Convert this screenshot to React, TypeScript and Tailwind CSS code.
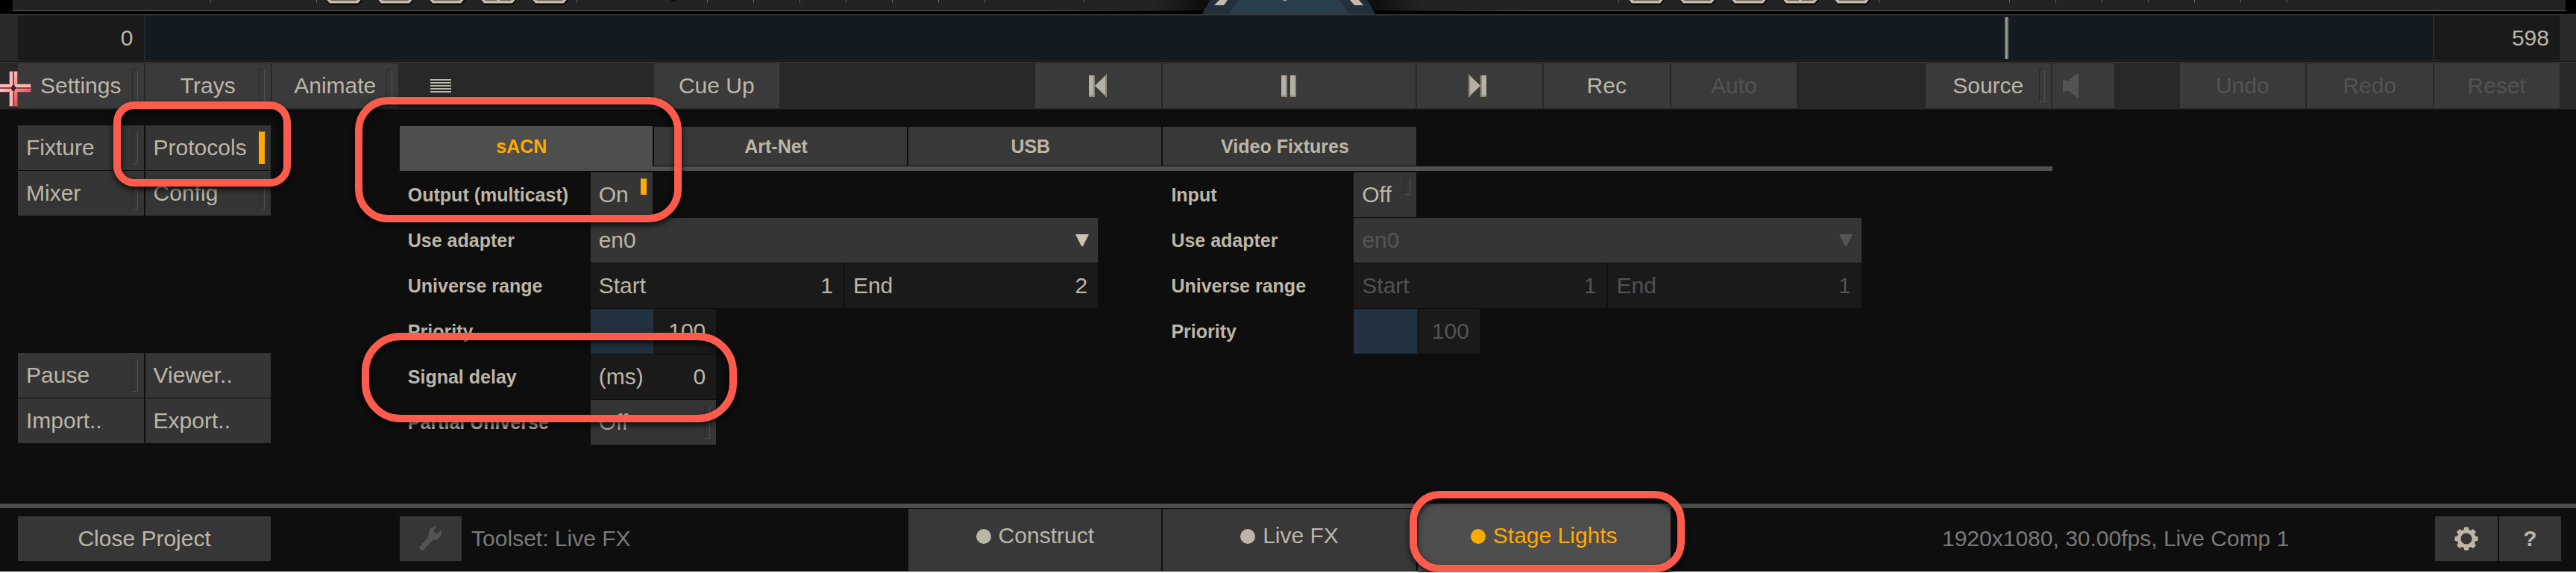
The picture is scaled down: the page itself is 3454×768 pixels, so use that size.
import type { ReactNode } from "react";

const LIGHT = "#bcb6a8";

function Led({ on = false, short = false }: { on?: boolean; short?: boolean }) {
  return (
    <span
      className={`absolute right-2 top-2 w-2 border ${short ? "h-[22px]" : "h-11"} ${
        on
          ? "border-[#ffaa00] border-t-[#b97a00] bg-[#ffaa00]"
          : "border-r-[#505050] border-b-[#505050] border-t-[#292929] border-l-[#2b2b2b]"
      }`}
    />
  );
}

function BarButton({
  children,
  span = "col-span-2",
  led = false,
  disabled = false,
  label,
}: {
  children: ReactNode;
  span?: string;
  led?: boolean;
  disabled?: boolean;
  label?: string;
}) {
  return (
    <button
      type="button"
      aria-label={label}
      disabled={disabled}
      className={`relative flex h-[60px] items-center justify-center bg-[#3a3a3a] ${
        disabled ? "text-[#535353]" : ""
      } ${span}`}
    >
      {children}
      {led && <Led />}
    </button>
  );
}

function SideButton({ children, led = false, on = false }: { children: ReactNode; led?: boolean; on?: boolean }) {
  return (
    <button
      type="button"
      aria-pressed={led ? on : undefined}
      className="relative h-[60px] w-full bg-[#353535] px-[11px] text-left"
    >
      {children}
      {led && <Led on={on} />}
    </button>
  );
}

function Ring({ className }: { className: string }) {
  return (
    <span
      aria-hidden="true"
      className={`pointer-events-none absolute z-20 border-10 border-[#ff5b4c] shadow-[0_4px_8px_rgba(0,0,0,0.75),inset_0_4px_8px_rgba(0,0,0,0.75)] ${className}`}
    />
  );
}

function FrameRow({ x }: { x: number[] }) {
  return (
    <>
      {x.map((left, i) => (
        <g key={left}>
          <path
            d={`M${left + 3} -8V0.5L${left + 6} 3.5H${left + 41}L${left + 44} 0.5V-8`}
            fill="none"
            stroke="#000"
            strokeWidth="6"
          />
          <path
            d={`M${left + 2} -8V-1L${left + 5} 2.5H${left + 41}L${left + 44} -1V-8`}
            fill="none"
            stroke="#c2bbac"
            strokeWidth="4"
          />
          {i === 3 && <path d={`M${left + 23} -8V2`} stroke="#c2bbac" strokeWidth="4" />}
        </g>
      ))}
    </>
  );
}

function Ticks({ x }: { x: number[] }) {
  return (
    <>
      {x.map((left) => (
        <rect key={left} x={left} y="0" width="1" height="4" fill="#5c5c5c" />
      ))}
    </>
  );
}

function ViewerStrip() {
  return (
    <div className="relative flex h-[19px] justify-between overflow-hidden bg-black pl-[17px] pr-3.5">
      <div className="flex h-[15px] w-full justify-between border-b border-[#5a5a5a] bg-[#232323]">
        <svg width="1480" height="14" viewBox="17 0 1480 14" className="shrink-0" aria-hidden="true">
          <Ticks x={[282, 424, 773, 948, 1010, 1072, 1134, 1196, 1258, 1320, 1453]} />
          <FrameRow x={[438, 507, 576, 645, 714]} />
          <path d="M899 0H907L904 2.500H901Z" fill="#150d02" />
        </svg>
        <svg width="1300" height="14" viewBox="2140 0 1300 14" className="shrink-0" aria-hidden="true">
          <Ticks x={[2170, 2519, 2694, 2756, 2818, 2880, 2942, 3004, 3066]} />
          <FrameRow x={[2184, 2253, 2322, 2391, 2460]} />
        </svg>
      </div>
      <svg
        width="640"
        height="19"
        viewBox="-320 0 640 19"
        className="absolute left-1/2 top-0 -translate-x-1/2"
        aria-hidden="true"
      >
        <defs>
          <linearGradient id="edge">
            <stop offset="0" stopColor="#000" stopOpacity="0" />
            <stop offset="0.3" stopColor="#000" stopOpacity="1" />
            <stop offset="0.7" stopColor="#000" stopOpacity="1" />
            <stop offset="1" stopColor="#000" stopOpacity="0" />
          </linearGradient>
          <linearGradient id="halo">
            <stop offset="0.22" stopColor="#000" stopOpacity="0" />
            <stop offset="0.32" stopColor="#000" stopOpacity="0.6" />
            <stop offset="0.68" stopColor="#000" stopOpacity="0.6" />
            <stop offset="0.78" stopColor="#000" stopOpacity="0" />
          </linearGradient>
        </defs>
        <rect x="-320" y="0" width="640" height="14" fill="url(#halo)" />
        <rect x="-320" y="14" width="640" height="1" fill="url(#edge)" />
        <circle cx="1" cy="73" r="128" fill="#22303e" />
        <circle cx="1" cy="60" r="90" fill="#2a3f4e" />
        <path d="M-92 0H-81L-86 7H-99Z" fill="#c2bbac" />
        <path d="M95 0H83L89 7H101Z" fill="#c2bbac" />
        <circle cx="-4" cy="-3" r="4" fill="#c2bbac" />
      </svg>
    </div>
  );
}

function Timeline() {
  return (
    <div className="grid grid-cols-40 gap-x-[2px] border-t border-b border-t-[#363636] border-b-[#191919] bg-[#282828] py-px pl-6 pr-[22px]">
      <output className="col-span-2 h-[60px] bg-[#1a1a1a] pr-3.5 text-right">0</output>
      <input
        type="range"
        aria-label="Frame"
        min={0}
        max={598}
        defaultValue={487}
        className="col-span-36 h-[60px] w-full appearance-none bg-[#131a21] [&::-webkit-slider-thumb]:h-14 [&::-webkit-slider-thumb]:w-[5px] [&::-webkit-slider-thumb]:appearance-none [&::-webkit-slider-thumb]:border-x-2 [&::-webkit-slider-thumb]:border-[#77776e] [&::-webkit-slider-thumb]:bg-[#a5a497]"
      />
      <output className="col-span-2 h-[60px] bg-[#1a1a1a] pr-3.5 text-right">598</output>
    </div>
  );
}

function StepIcon({ flip = false }: { flip?: boolean }) {
  return (
    <svg width="24" height="32" viewBox="0 0 24 32" className={flip ? "-scale-x-100" : ""} aria-hidden="true">
      <path d="M0 2H8V31H0Z" fill="#8f897c" />
      <path d="M0 2H6V29H0Z" fill="#b7b1a3" />
      <path d="M24 0V32L8 16Z" fill="#8f897c" />
      <path d="M22 3V28L8 16Z" fill="#b7b1a3" />
    </svg>
  );
}

function Toolbar() {
  return (
    <div className="relative grid grid-cols-40 gap-x-[2px] border-t border-b border-t-[#363636] border-b-[#1c1c1c] bg-[#282828] py-px pl-6 pr-[22px]">
      <svg
        width="42"
        height="48"
        viewBox="0 0 42 48"
        className="absolute left-0 top-[11px] z-10"
        aria-hidden="true"
      >
        <defs>
          <linearGradient id="crossV" x1="0" y1="0" x2="0" y2="1">
            <stop offset="0" stopColor="#f7b9bb" />
            <stop offset="1" stopColor="#f04a58" />
          </linearGradient>
          <linearGradient id="crossH" x1="0" y1="0" x2="1" y2="0">
            <stop offset="0" stopColor="#f9c4c4" />
            <stop offset="1" stopColor="#f25563" />
          </linearGradient>
        </defs>
        <path d="M12 0H24V48H12ZM0 17H42V29H0Z" fill="#8a4347" />
        <path d="M19 1H23V19H19ZM19 27H23V47H19Z" fill="url(#crossV)" />
        <path d="M13 1H17V19H13ZM13 27H17V47H13Z" fill="#f9b8ba" />
        <path d="M0 18H16V22H0ZM20 18H41V22H20Z" fill="#f9b8ba" />
        <path d="M0 24H16V28H0ZM20 24H41V28H20Z" fill="url(#crossH)" />
        <circle cx="18" cy="23" r="3" fill="#3a2123" />
      </svg>
      <BarButton led>Settings</BarButton>
      <BarButton led>Trays</BarButton>
      <BarButton led>Animate</BarButton>
      <button type="button" aria-label="Menu" className="col-span-2 flex items-center pl-[41px]">
        <svg width="28" height="18" viewBox="0 0 28 18" fill={LIGHT} aria-hidden="true">
          <path d="M0 0H28V2H0ZM0 4H28V6H0ZM0 8H28V10H0ZM0 12H28V14H0ZM0 16H28V18H0Z" />
        </svg>
      </button>
      <BarButton span="col-span-2 col-start-11">Cue Up</BarButton>
      <BarButton span="col-span-2 col-start-17" label="Previous">
        <StepIcon />
      </BarButton>
      <BarButton span="col-span-4" label="Pause playback">
        <svg width="20" height="29" viewBox="0 0 20 29" aria-hidden="true">
          <path d="M0 0H8V29H0ZM12 0H20V29H12Z" fill="#8f897c" />
          <path d="M0 0H6V27H0ZM12 0H18V27H12Z" fill="#b7b1a3" />
        </svg>
      </BarButton>
      <BarButton label="Next" span="col-span-2 pr-1.5">
        <StepIcon flip />
      </BarButton>
      <BarButton>Rec</BarButton>
      <BarButton disabled>Auto</BarButton>
      <BarButton span="col-span-2 col-start-31" led>
        Source
      </BarButton>
      <button type="button" aria-label="Audio" disabled className="flex h-[60px] items-center bg-[#3a3a3a] pl-3.5">
        <svg width="22" height="34" viewBox="0 0 22 34" fill="#535353" aria-hidden="true">
          <path d="M0 9H3V10H8V9L21 0V34L8 24H3V26H0Z" />
        </svg>
      </button>
      <BarButton span="col-span-2 col-start-35" disabled>
        Undo
      </BarButton>
      <BarButton disabled>Redo</BarButton>
      <BarButton disabled>Reset</BarButton>
    </div>
  );
}

function FieldRow({ label, htmlFor, children }: { label: string; htmlFor: string; children: ReactNode }) {
  return (
    <div className="relative grid grid-cols-12 gap-x-[2px]">
      <label htmlFor={htmlFor} className="col-span-3 px-[11px] text-[25px] font-bold">
        {label}
      </label>
      {children}
    </div>
  );
}

function NumberField({
  id,
  prefix,
  value,
  disabled = false,
  span,
}: {
  id: string;
  prefix: string;
  value: string;
  disabled?: boolean;
  span: string;
}) {
  return (
    <div className={`flex h-[60px] bg-[#1a1a1a] pl-[11px] pr-3.5 ${disabled ? "text-[#525252]" : ""} ${span}`}>
      <span>{prefix}</span>
      <input
        id={id}
        aria-label={prefix}
        defaultValue={value}
        disabled={disabled}
        className="w-0 min-w-0 flex-1 bg-transparent text-right"
      />
    </div>
  );
}

function AdapterSelect({ id, disabled = false }: { id: string; disabled?: boolean }) {
  return (
    <div className="relative col-span-8">
      <select
        id={id}
        disabled={disabled}
        className={`h-[60px] w-full appearance-none bg-[#353535] px-[11px] opacity-100 ${
          disabled ? "text-[#555555]" : ""
        }`}
      >
        <option>en0</option>
      </select>
      <svg
        width="18"
        height="16"
        viewBox="0 0 18 16"
        className="pointer-events-none absolute right-3 top-[22px]"
        fill={disabled ? "#555555" : "#c9c3b5"}
        aria-hidden="true"
      >
        <path d="M0 0H18L10 16H8Z" />
      </svg>
    </div>
  );
}

function PriorityField({ id, disabled = false }: { id: string; disabled?: boolean }) {
  return (
    <div className={`col-span-2 flex h-[60px] bg-[#1a1a1a] ${disabled ? "text-[#525252]" : ""}`}>
      <span className="w-1/2 bg-[#22313f]" />
      <input
        id={id}
        defaultValue="100"
        disabled={disabled}
        className="w-1/2 bg-transparent pr-3.5 text-right"
      />
    </div>
  );
}

function Toggle({ id, value, on = false }: { id: string; value: string; on?: boolean }) {
  return (
    <button id={id} type="button" aria-pressed={on} className="relative h-[60px] bg-[#353535] px-[11px] text-left">
      {value}
      <Led on={on} short />
    </button>
  );
}

function ProtocolTabs() {
  return (
    <div
      role="tablist"
      className="grid h-[60px] grid-cols-26 items-start gap-x-[2px] bg-[linear-gradient(to_top,#505050_6px,transparent_6px)] text-[25px] font-bold"
    >
      <div className="relative col-span-4">
        <button
          role="tab"
          type="button"
          aria-selected="true"
          className="flex h-[60px] w-full items-center justify-center bg-[#4e4e4e] pb-1.5 pr-3 text-[#ffaa00]"
        >
          sACN
        </button>
        <Ring className="-bottom-[69px] -left-[60px] -right-[39px] -top-[39px] rounded-[44px]" />
      </div>
      {["Art-Net", "USB", "Video Fixtures"].map((name) => (
        <button
          key={name}
          role="tab"
          type="button"
          aria-selected="false"
          className="col-span-4 mt-px flex h-[52px] items-center justify-center bg-[#383838] pr-3"
        >
          {name}
        </button>
      ))}
    </div>
  );
}

function Panel() {
  return (
    <div className="grid h-[528px] grid-cols-40 gap-x-[2px] pl-6 pr-5 pt-[21px]">
      <nav className="col-span-4 flex flex-col justify-between pb-[81px]">
        <div className="grid grid-cols-2 gap-x-[2px] gap-y-px">
          <SideButton led>Fixture</SideButton>
          <div className="relative">
            <SideButton led on>
              Protocols
            </SideButton>
            <Ring className="-bottom-[22px] -left-[43px] -right-[27px] -top-8 rounded-[28px]" />
          </div>
          <SideButton led>Mixer</SideButton>
          <SideButton led>Config</SideButton>
        </div>
        <div className="grid grid-cols-2 gap-x-[2px] gap-y-px">
          <SideButton led>Pause</SideButton>
          <SideButton>Viewer..</SideButton>
          <SideButton>Import..</SideButton>
          <SideButton>Export..</SideButton>
        </div>
      </nav>
      <main className="col-span-26 col-start-7 pt-px">
        <ProtocolTabs />
        <div className="grid grid-cols-26 gap-x-[2px] pt-[2px]">
          <section className="col-span-12 flex flex-col gap-px">
            <FieldRow label="Output (multicast)" htmlFor="output">
              <Toggle id="output" value="On" on />
            </FieldRow>
            <FieldRow label="Use adapter" htmlFor="out-adapter">
              <AdapterSelect id="out-adapter" />
            </FieldRow>
            <FieldRow label="Universe range" htmlFor="out-start">
              <NumberField id="out-start" prefix="Start" value="1" span="col-span-4" />
              <NumberField id="out-end" prefix="End" value="2" span="col-span-4" />
            </FieldRow>
            <FieldRow label="Priority" htmlFor="out-priority">
              <PriorityField id="out-priority" />
            </FieldRow>
            <FieldRow label="Signal delay" htmlFor="delay">
              <NumberField id="delay" prefix="(ms)" value="0" span="col-span-2" />
              <div className="absolute inset-y-0 left-0 w-5/12">
                <Ring className="-bottom-[31px] -left-[51px] -right-[27px] -top-[29px] rounded-[52px]" />
              </div>
            </FieldRow>
            <FieldRow label="Partial Universe" htmlFor="partial">
              <button
                id="partial"
                type="button"
                aria-pressed="false"
                className="relative col-span-2 h-[60px] bg-[#353535] px-[11px] text-left"
              >
                Off
                <Led />
              </button>
            </FieldRow>
          </section>
          <section className="col-span-12 flex flex-col gap-px">
            <FieldRow label="Input" htmlFor="input">
              <Toggle id="input" value="Off" />
            </FieldRow>
            <FieldRow label="Use adapter" htmlFor="in-adapter">
              <AdapterSelect id="in-adapter" disabled />
            </FieldRow>
            <FieldRow label="Universe range" htmlFor="in-start">
              <NumberField id="in-start" prefix="Start" value="1" disabled span="col-span-4" />
              <NumberField id="in-end" prefix="End" value="1" disabled span="col-span-4" />
            </FieldRow>
            <FieldRow label="Priority" htmlFor="in-priority">
              <PriorityField id="in-priority" disabled />
            </FieldRow>
          </section>
        </div>
      </main>
    </div>
  );
}

function WrenchIcon() {
  return (
    <svg width="30" height="36" viewBox="0 0 30 36" fill="none" aria-hidden="true">
      <path d="M4 30L17 16" stroke="#535353" strokeWidth="7" strokeLinecap="round" />
      <path
        d="M24 1.500C18 0.500 13 5 13 10C13 13 12 15 11 17L16 22C18 20 20 20 23 19.500C28 18.500 31 12 29.500 5.500L25.500 11.500L20.500 10L19.500 6Z"
        fill="#535353"
      />
    </svg>
  );
}

function GearIcon() {
  return (
    <svg width="34" height="34" viewBox="-17 -17 34 34" fill={LIGHT} aria-hidden="true">
      {[0, 45, 90, 135, 180, 225, 270, 315].map((angle) => (
        <path key={angle} d="M-4 -9L-2.800 -15.500H2.800L4 -9Z" transform={`rotate(${angle})`} />
      ))}
      <circle r="10" fill="none" stroke={LIGHT} strokeWidth="5" />
    </svg>
  );
}

function Footer() {
  return (
    <footer className="grid grid-cols-40 items-start gap-x-[2px] bg-[linear-gradient(to_bottom,#4e4e4e_6px,transparent_6px)] pl-6 pr-5">
      <button type="button" className="col-span-4 mt-[17px] h-[60px] bg-[#363636]">
        Close Project
      </button>
      <button
        type="button"
        aria-label="Toolset"
        disabled
        className="col-start-7 mt-[17px] flex h-[60px] items-center justify-center bg-[#363636]"
      >
        <WrenchIcon />
      </button>
      <p className="col-span-7 mt-[17px] pl-[11px] text-[#797979]">Toolset: Live FX</p>
      {["Construct", "Live FX"].map((name) => (
        <button
          key={name}
          type="button"
          className="col-span-4 mt-[7px] flex h-[83px] items-center justify-center gap-2.5 bg-[#383838] pb-[11px]"
        >
          <span className="mt-[2px] size-5 rounded-full bg-[#bcb6a8]" />
          {name}
        </button>
      ))}
      <div className="relative col-span-4">
        <button
          type="button"
          aria-current="page"
          className="flex h-[92px] w-full items-center justify-center gap-2.5 bg-[#4e4e4e] pb-1.5 text-[#ffaa00]"
        >
          <span className="mt-[2px] size-5 rounded-full bg-[#ffaa00]" />
          Stage Lights
        </button>
        <Ring className="-left-[11px] -right-[19px] -top-[17px] bottom-0 rounded-[40px]" />
      </div>
      <p className="col-span-7 col-start-31 mt-[17px] pl-[21px] text-[#797979]">
        1920x1080, 30.00fps, Live Comp 1
      </p>
      <button
        type="button"
        aria-label="Preferences"
        className="col-start-39 mt-[17px] flex h-[60px] items-center justify-center bg-[#363636]"
      >
        <GearIcon />
      </button>
      <button type="button" className="mt-[17px] h-[60px] bg-[#363636] font-bold">
        ?
      </button>
    </footer>
  );
}

export default function App() {
  return (
    <div className="overflow-hidden bg-[linear-gradient(to_top,#ffffff_1px,#0e0e0e_1px)] font-['Liberation_Sans',Arial,sans-serif] text-[30px] leading-[60px] whitespace-nowrap text-[#bcb6a8]">
      <ViewerStrip />
      <Timeline />
      <Toolbar />
      <Panel />
      <Footer />
    </div>
  );
}
